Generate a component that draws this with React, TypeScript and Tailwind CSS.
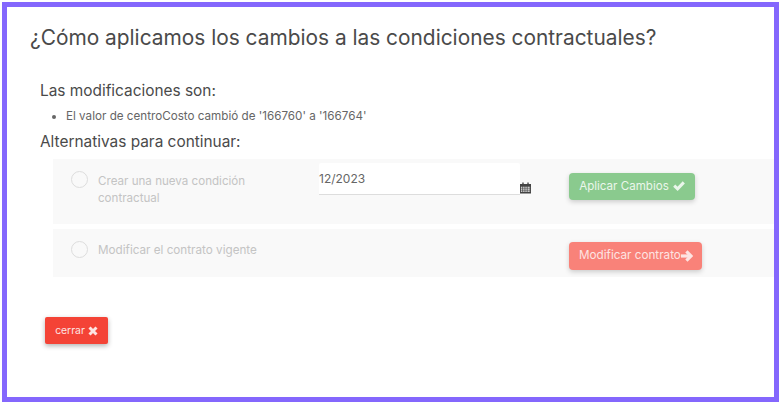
function CalendarIcon() {
  return (
    <svg viewBox="0 0 12 12" className="mt-[19px] h-[12px] w-[11px] shrink-0" fill="#444">
      <rect x="2.5" y="0" width="1.5" height="2.5" />
      <rect x="8" y="0" width="1.5" height="2.5" />
      <path fillRule="evenodd" d="M0 1.5h12V12H0z M1 4.5v1.2h1.6V4.5z M3.4 4.5v1.2h1.6V4.5z M5.8 4.5v1.2h1.6V4.5z M8.2 4.5v1.2h1.6V4.5z M10.2 4.5v1.2H11V4.5z M1 6.6v1.2h1.6V6.6z M3.4 6.6v1.2h1.6V6.6z M5.8 6.6v1.2h1.6V6.6z M8.2 6.6v1.2h1.6V6.6z M10.2 6.6v1.2H11V6.6z M1 8.8V10h1.6V8.8z M3.4 8.8V10h1.6V8.8z M5.8 8.8V10h1.6V8.8z M8.2 8.8V10h1.6V8.8z M10.2 8.8V10H11V8.8z" />
    </svg>
  );
}

function CheckIcon() {
  return (
    <svg viewBox="0 0 12 10" className="mb-[2px] h-[10px] w-[12px] shrink-0" fill="none" stroke="currentColor" strokeWidth="3">
      <path d="M1.2 4.6 L4.6 7.8 L10.8 1.4" />
    </svg>
  );
}

function ArrowIcon() {
  return (
    <svg viewBox="0 0 12 12" className="h-[12px] w-[12px] shrink-0" fill="none" stroke="currentColor" strokeWidth="3.2">
      <path d="M0 6 H10" />
      <path d="M5.4 1.4 L10 6 L5.4 10.6" />
    </svg>
  );
}

function CloseIcon() {
  return (
    <svg viewBox="0 0 10 10" className="h-[10px] w-[10px] shrink-0" fill="none" stroke="currentColor" strokeWidth="3">
      <path d="M1.5 1.5 L8.5 8.5 M8.5 1.5 L1.5 8.5" />
    </svg>
  );
}

export default function App() {
  return (
    <div className="h-[403px] w-[781px] bg-white p-[2px] pb-[1px] font-['Inter',sans-serif]">
      <div className="h-full w-full overflow-hidden border-[5px] border-[#8467fd] bg-white pl-[23px] pt-[16px]">
        <h1 className="text-[20.87px] leading-[30px] font-normal text-[#4a4a4a]">¿Cómo aplicamos los cambios a las condiciones contractuales?</h1>
        <div className="pl-[10px] pt-[28px]">
          <h2 className="text-[15.4px] leading-[20px] text-[#4a4a4a]">Las modificaciones son:</h2>
          <ul className="mt-[7px] list-disc pl-[26px] text-[11.66px] leading-[16px] text-[#666]">
            <li>El valor de centroCosto cambió de '166760' a '166764'</li>
          </ul>
          <h2 className="mt-[8px] text-[15.4px] leading-[20px] text-[#4a4a4a]">Alternativas para continuar:</h2>
        </div>
        <div className="ml-[23px] mt-[7px] w-[760px]">
          <div className="flex h-[65px] bg-[#f9f9f9] pl-[18px]">
            <div className="mt-[12px] h-[17px] w-[17px] shrink-0 rounded-full border border-[#ddd]"></div>
            <div className="ml-[10px] mt-[14px] w-[190px] text-[11.6px] leading-[17px] text-[#c4c4c4]">Crear una nueva condición contractual</div>
            <div className="ml-[31px] mt-[4px] flex h-[32px] w-[201px] items-start rounded-t-[2px] border-b border-[#ddd] bg-white pt-[7px] text-[12px] leading-[18px] text-[#666]">12/2023</div>
            <div className="mt-[4px]"><CalendarIcon /></div>
            <div className="ml-[38px] mt-[14px] flex h-[27px] w-[126px] items-center justify-center gap-[4px] rounded-[4px] bg-[#8aca8e] text-[11.6px] text-[#eaf6eb] shadow-[0_2px_5px_rgba(0,0,0,0.18)]">
              Aplicar Cambios <CheckIcon />
            </div>
          </div>
          <div className="mt-[5px] flex h-[48px] bg-[#f9f9f9] pl-[18px]">
            <div className="mt-[12px] h-[17px] w-[17px] shrink-0 rounded-full border border-[#ddd]"></div>
            <div className="ml-[10px] mt-[13px] w-[190px] text-[11.7px] leading-[17px] text-[#c4c4c4]">Modificar el contrato vigente</div>
            <div className="ml-[281px] mt-[13px] flex h-[28px] w-[133px] items-center rounded-[4px] bg-[#f98279] pl-[10px] text-[11.7px] text-[#fde4e2] shadow-[0_2px_5px_rgba(0,0,0,0.18)]">
              Modificar contrato<ArrowIcon />
            </div>
          </div>
        </div>
        <div className="ml-[15px] mt-[40px] flex h-[27px] w-[63px] items-center justify-center gap-[3px] rounded-[2px] bg-[#f44336] text-[10.4px] text-[#fde4e2] shadow-[0_2px_5px_rgba(0,0,0,0.3)]">
          cerrar <CloseIcon />
        </div>
      </div>
    </div>
  );
}
